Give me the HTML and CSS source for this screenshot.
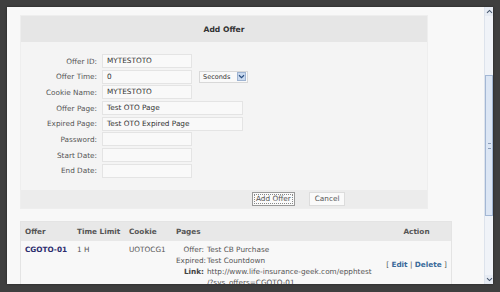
FILE: index.html
```html
<!DOCTYPE html>
<html>
<head>
<meta charset="utf-8">
<link rel="stylesheet" href="styles.css">
</head>
<body>
<div class="window">
  <div class="content">
    <div class="panel">
      <div class="panel-head">Add Offer</div>
      <div class="form">
        <div class="row"><span class="lbl">Offer ID:</span><span class="inp">MYTESTOTO</span></div>
        <div class="row"><span class="lbl">Offer Time:</span><span class="inp">0</span><span class="sel">Seconds<span class="arrow"><svg width="7" height="5" viewBox="0 0 7 5"><path d="M1 1.2 L3.5 3.6 L6 1.2" fill="none" stroke="#2b4f80" stroke-width="1.2"/></svg></span></span></div>
        <div class="row"><span class="lbl">Cookie Name:</span><span class="inp">MYTESTOTO</span></div>
        <div class="row"><span class="lbl">Offer Page:</span><span class="inp wide">Test OTO Page</span></div>
        <div class="row"><span class="lbl">Expired Page:</span><span class="inp wide">Test OTO Expired Page</span></div>
        <div class="row"><span class="lbl">Password:</span><span class="inp"></span></div>
        <div class="row"><span class="lbl">Start Date:</span><span class="inp"></span></div>
        <div class="row"><span class="lbl">End Date:</span><span class="inp"></span></div>
      </div>
      <div class="panel-foot">
        <span class="btn primary">Add Offer</span>
        <span class="btn">Cancel</span>
      </div>
    </div>
    <div class="table">
      <div class="thead">
        <span class="c-offer">Offer</span>
        <span class="c-time">Time Limit</span>
        <span class="c-cookie">Cookie</span>
        <span class="c-pages">Pages</span>
        <span class="c-action">Action</span>
      </div>
      <div class="trow">
        <span class="c-offer offer-id">CGOTO-01</span>
        <span class="c-time">1 H</span>
        <span class="c-cookie">UOTOCG1</span>
        <div class="c-pages pages">
          <div class="pl"><span class="pk">Offer:</span>Test CB Purchase</div>
          <div class="pl"><span class="pk">Expired:</span>Test Countdown</div>
          <div class="pl"><span class="pk link">Link:</span>http://www.life-insurance-geek.com/epphtest</div>
          <div class="pl"><span class="pk"></span>/?sys_offers=CGOTO-01</div>
        </div>
        <span class="c-action actions">[ <a>Edit</a> | <a>Delete</a> ]</span>
      </div>
    </div>
  </div>
  <div class="scrollbar">
    <div class="sb-btn"><svg width="7" height="5" viewBox="0 0 7 5"><path d="M1 3.8 L3.5 1.4 L6 3.8" fill="none" stroke="#4a5a70" stroke-width="1.1"/></svg></div>
    <div class="sb-track"><div class="sb-thumb"><span class="grip"></span></div></div>
    <div class="sb-btn down"><svg width="7" height="5" viewBox="0 0 7 5"><path d="M1 1.2 L3.5 3.6 L6 1.2" fill="none" stroke="#4a5a70" stroke-width="1.1"/></svg></div>
  </div>
</div>
</body>
</html>
```

FILE: styles.css
```css
html, body {
  margin: 0;
  padding: 0;
}
body {
  width: 500px;
  height: 292px;
  overflow: hidden;
  background: #3f3f3f;
  font-family: "DejaVu Sans", Verdana, sans-serif;
  font-size: 7.3px;
  color: #555;
}
.window {
  margin: 7px;
  width: 486px;
  height: 277px;
  background: #f8f8f8;
  display: flex;
  box-shadow: 0 0 2px #222;
}
.content {
  flex: 1;
  overflow: hidden;
  padding: 8px 0 0 13px;
}
.panel {
  width: 408px;
  background: #f4f4f4;
  border: 1px solid #eeeeee;
  box-sizing: border-box;
}
.panel-head {
  height: 26px;
  background: #e6e6e6;
  display: flex;
  align-items: center;
  justify-content: center;
  font-weight: bold;
  color: #333;
  font-size: 7.6px;
}
.form {
  padding: 12px 0 12px 0;
  display: flex;
  flex-direction: column;
  gap: 1.7px;
}
.row {
  display: flex;
  align-items: center;
  height: 14px;
}
.lbl {
  width: 76px;
  text-align: right;
  padding-right: 5px;
  color: #555;
}
.inp {
  width: 90px;
  height: 14px;
  box-sizing: border-box;
  border: 1px solid #e4e4e4;
  background: #f9f9f9;
  padding: 0 0 0 4px;
  line-height: 12px;
  color: #333;
}
.inp.wide {
  width: 141px;
}
.sel {
  margin-left: 7px;
  width: 49px;
  height: 12px;
  box-sizing: border-box;
  border: 1px solid #d8d8d8;
  background: #f9f9f9;
  display: flex;
  align-items: center;
  justify-content: space-between;
  padding-left: 3px;
  font-size: 6.5px;
  color: #333;
}
.arrow {
  width: 9px;
  height: 9px;
  margin-right: 1px;
  background: #c9d9ee;
  border: 1px solid #9fb4d2;
  box-sizing: border-box;
  display: flex;
  align-items: center;
  justify-content: center;
}
.panel-foot {
  height: 18px;
  background: #ececec;
  display: flex;
  align-items: center;
  padding-left: 231px;
  gap: 14px;
}
.btn {
  height: 14px;
  box-sizing: border-box;
  border: 1px solid #dcdcdc;
  background: #fafafa;
  padding: 0 5px;
  line-height: 12px;
  color: #555;
}
.btn.primary {
  border: 1px solid #999;
  outline: 1px dotted #888;
  outline-offset: -3px;
  padding: 0 3px;
}
.table {
  margin-top: 12px;
  width: 432px;
  border: 1px solid #e4e4e4;
  box-sizing: border-box;
  background: #f8f8f8;
}
.thead {
  height: 19px;
  background: #e8e8e8;
  display: flex;
  align-items: center;
  font-weight: bold;
  color: #555;
}
.trow {
  display: flex;
  align-items: flex-start;
  padding-top: 4px;
}
.c-offer { width: 56px; padding-left: 4px; box-sizing: border-box; flex: none; }
.c-time { width: 52px; flex: none; }
.c-cookie { width: 47px; flex: none; }
.c-pages { width: 206px; flex: none; }
.c-action { flex: 1; text-align: center; }
.offer-id {
  font-weight: bold;
  color: #2d2d6e;
}
.pages {
  display: flex;
  flex-direction: column;
  gap: 2px;
}
.pl {
  display: flex;
  white-space: nowrap;
}
.pk {
  width: 28px;
  text-align: right;
  margin-right: 3px;
  flex: none;
}
.pk.link {
  font-weight: bold;
  color: #444;
}
.actions {
  padding-top: 15px;
  color: #555;
}
.actions a {
  color: #3a6a9a;
  font-weight: bold;
}
.scrollbar {
  width: 8px;
  background: #f0f3f8;
  border-left: 1px solid #dde3ec;
  display: flex;
  flex-direction: column;
}
.sb-btn {
  height: 9px;
  display: flex;
  align-items: center;
  justify-content: center;
  background: #e6ebf3;
}
.sb-track {
  flex: 1;
  padding-top: 59px;
  padding-bottom: 59px;
  display: flex;
}
.sb-thumb {
  flex: 1;
  background: #dce6f4;
  border: 1px solid #a3b7d4;
  display: flex;
  align-items: center;
  justify-content: center;
}
.grip {
  width: 3px;
  height: 4px;
  border-top: 1px solid #8a9cb8;
  border-bottom: 1px solid #8a9cb8;
}
```
